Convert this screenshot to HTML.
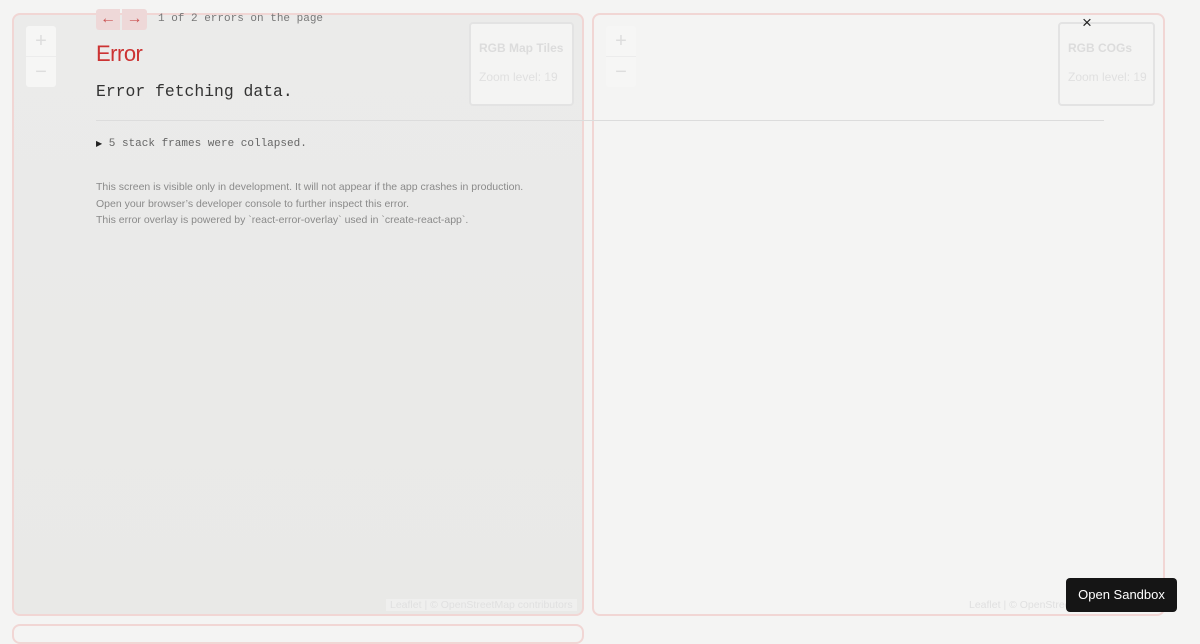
<!DOCTYPE html>
<html><head><style>
*{margin:0;padding:0;box-sizing:border-box}
body{width:1200px;height:630px;background:#f4f4f3;position:relative;overflow:hidden;font-family:"Liberation Sans",sans-serif}
.map{position:absolute;border:2px solid #f1d6d4;border-radius:8px}
.ctl{position:absolute;width:30px;height:61px;background:#f6f6f5;border-radius:3px;color:#ddd;font-size:20px;text-align:center;line-height:30px}
.ctl div:first-child{border-bottom:1px solid #ececec}
.box{position:absolute;border:2px solid #e3e3e3;border-radius:4px;background:#f4f4f3;padding:0 8px;white-space:nowrap}
.box b{display:block;margin-top:17px;font-size:12px;color:#dcdcdc}
.box span{display:block;margin-top:15px;font-size:12px;color:#e0e0e0}
.attr{position:absolute;font-size:10.5px;color:#e0e0e0;white-space:nowrap}
.mono{font-family:"Liberation Mono",monospace;white-space:nowrap}
</style></head><body>
<div class="map" style="left:12px;top:13px;width:572px;height:603px;background:linear-gradient(180deg,#ebebea,#e9e9e7)"></div>
<div class="map" style="left:592px;top:13px;width:573px;height:603px"></div>
<div class="map" style="left:12px;top:624px;width:572px;height:20px"></div>
<div class="ctl" style="left:26px;top:26px"><div>+</div><div>−</div></div>
<div class="ctl" style="left:606px;top:26px"><div>+</div><div>−</div></div>
<div class="box" style="left:469px;top:22px;width:105px;height:84px"><b>RGB Map Tiles</b><span>Zoom level: 19</span></div>
<div class="box" style="left:1058px;top:22px;width:97px;height:84px"><b>RGB COGs</b><span>Zoom level: 19</span></div>
<div class="attr" style="left:386px;top:599px;background:#efefee;padding:0 4px">Leaflet | © OpenStreetMap contributors</div>
<div class="attr" style="left:969px;top:599px">Leaflet | © OpenStreetMap contributors</div>
<div style="position:absolute;left:96px;top:9px;width:24px;height:21px;background:#eed8d8;border-radius:3px 0 0 3px;color:#c55;text-align:center;font-size:16px;line-height:19px">←</div>
<div style="position:absolute;left:122px;top:9px;width:25px;height:21px;background:#eed8d8;border-radius:0 3px 3px 0;color:#c55;text-align:center;font-size:16px;line-height:19px">→</div>
<div class="mono" style="position:absolute;left:158px;top:13px;font-size:11px;color:#777">1 of 2 errors on the page</div>
<div style="position:absolute;left:96px;top:41px;font-size:22px;color:#cc3333;letter-spacing:-0.5px">Error</div>
<div class="mono" style="position:absolute;left:96px;top:82px;font-size:16.4px;color:#333">Error fetching data.</div>
<div style="position:absolute;left:96px;top:120px;width:1008px;height:1px;background:#dcdcdc"></div>
<div class="mono" style="position:absolute;left:96px;top:138px;font-size:11px;color:#666"><span style="color:#222;font-size:8px">▶</span> 5 stack frames were collapsed.</div>
<div style="position:absolute;left:96px;top:179px;font-size:10.5px;color:#8a8a8a;line-height:16.5px;white-space:nowrap">This screen is visible only in development. It will not appear if the app crashes in production.<br>Open your browser’s developer console to further inspect this error.<br>This error overlay is powered by `react-error-overlay` used in `create-react-app`.</div>
<div style="position:absolute;left:1082px;top:13px;font-size:17px;color:#222">×</div>
<div style="position:absolute;left:1066px;top:578px;width:111px;height:34px;background:#151515;border-radius:4px;color:#fff;font-size:13px;text-align:center;line-height:34px">Open Sandbox</div>
</body></html>
